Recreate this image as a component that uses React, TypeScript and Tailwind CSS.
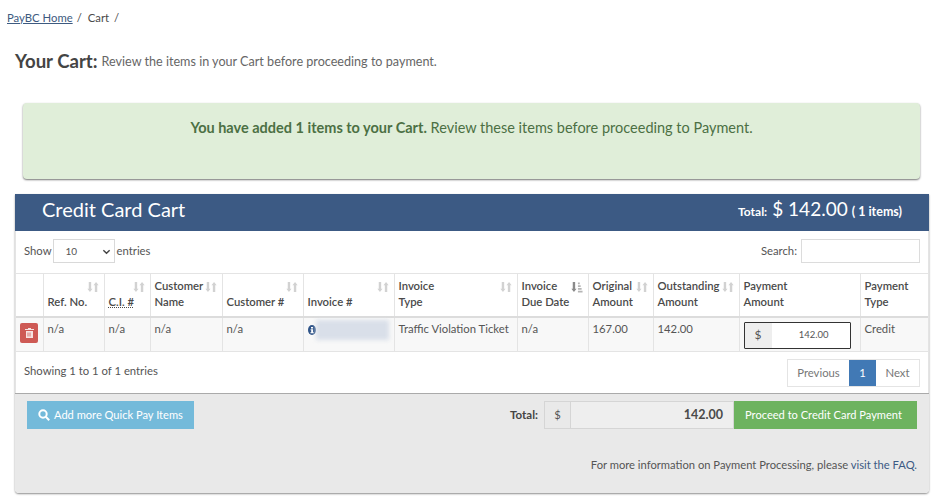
const F = "[font-family:'Lato','Open_Sans',sans-serif]";

function Sort({ active = false }: { active?: boolean }) {
  return (
    <svg width="12" height="12" viewBox="0 0 13 13" className="absolute right-[5px] top-[7px]" fill={active ? "#8a8a8a" : "#d2d2d2"}>
      <path d="M1.9 1h2.6v7.5H6L3.2 12 .4 8.5h1.5z" />
      {active ? (
        <path d="M7.5 1.5h2v2h-2zM7.5 4.5h3v2h-3zM7.5 7.5h4v2h-4zM7.5 10.5h5v2h-5z" fill="#b5b5b5" />
      ) : (
        <path d="M8.5 12h2.6V4.5h1.5L9.8 1 7 4.5h1.5z" />
      )}
    </svg>
  );
}

const cols = [
  { w: "w-[27px]", label: null },
  { w: "w-[61px]", label: <>Ref. No.</> },
  { w: "w-[46px]", label: <span className="underline decoration-dotted">C.I. #</span> },
  { w: "w-[72px]", label: <>Customer<br />Name</> },
  { w: "w-[81px]", label: <>Customer #</> },
  { w: "w-[91px]", label: <>Invoice #</> },
  { w: "w-[123px]", label: <>Invoice<br />Type</> },
  { w: "w-[71px]", label: <>Invoice<br />Due Date</>, active: true },
  { w: "w-[65px]", label: <>Original<br />Amount</> },
  { w: "w-[86px]", label: <>Outstanding<br />Amount</> },
  { w: "w-[121px]", label: <>Payment<br />Amount</>, nosort: true },
  { w: "w-[68px]", label: <>Payment<br />Type</>, nosort: true },
];

const td = "border-r border-[#e4e4e4] last:border-r-0 px-[4px] pt-[3px] align-top whitespace-nowrap";

export default function App() {
  return (
    <div className={`${F} w-[936px] h-[500px] overflow-hidden bg-white text-[11.3px] leading-[16px] text-[#555]`}>
      <div className="pl-[7px] pt-[10px] h-[44px] flex items-start text-[#4a4a4a]">
        <a className="underline text-[#3d5a80]">PayBC Home</a>
        <span className="ml-[4px]">/</span>
        <span className="ml-[6px]">Cart</span>
        <span className="ml-[5px]">/</span>
      </div>
      <div className="pl-[15px] h-[59px] flex items-start pt-[4px]">
        <span className="text-[18.6px] leading-[26px] font-bold text-[#444]">Your Cart:</span>
        <span className="ml-[4px] mt-[6px] text-[#666] text-[12.6px]">Review the items in your Cart before proceeding to payment.</span>
      </div>
      <div className="mx-[23px] w-[897px] h-[76px] rounded-[4px] bg-[#e0eed9] shadow-[0_1px_2px_rgba(0,0,0,0.55)] pt-[15px] text-center text-[14.5px] leading-[20px] text-[#4c7044]">
        <b className="font-bold">You have added 1 items to your Cart.</b> Review these items before proceeding to Payment.
      </div>
      <div className="ml-[15px] mt-[15px] w-[914px] h-[299px] rounded-b-[4px] shadow-[0_1px_2px_rgba(0,0,0,0.45)] flex flex-col">
        <div className="h-[37px] bg-[#3c5a84] flex items-center justify-between pl-[27px] pr-[27px] pb-[7px] text-white">
          <span className="text-[20px] leading-[24px]">Credit Card Cart</span>
          <div className="flex items-baseline pt-[3px] leading-[24px]">
            <span className="text-[12px] font-bold">Total:</span>
            <span className="text-[19px] ml-[5px]">$ 142.00</span>
            <span className="text-[12.5px] font-bold ml-[4px]">( 1 items)</span>
          </div>
        </div>
        <div className="h-[162px] bg-white border-x border-[#e4e4e4] flex flex-col">
          <div className="h-[42px] flex items-center justify-between pl-[8px] pr-[8px] shrink-0">
            <div className="flex items-center -mt-[2px]">
              <span>Show</span>
              <div className="ml-[1px] w-[62px] h-[24px] border border-[#d9d9d9] flex items-center justify-between pl-[12px] pr-[3px] text-[10px]">
                10
                <svg width="9" height="9" viewBox="0 0 10 10" fill="none" stroke="#444" strokeWidth="1.6"><path d="M1.5 3.5 5 7l3.5-3.5" /></svg>
              </div>
              <span className="ml-[2px]">entries</span>
            </div>
            <div className="flex items-center -mt-[2px]">
              <span>Search:</span>
              <div className="ml-[4px] w-[119px] h-[24px] border border-[#dcdcdc]" />
            </div>
          </div>
          <table className="table-fixed border-collapse w-[912px] shrink-0">
            <thead>
              <tr className="h-[43px] border-t border-[#e4e4e4] border-b-[2px] border-b-[#dcdcdc]">
                {cols.map((c, i) => (
                  <th key={i} className={`${c.w} relative border-r border-[#e4e4e4] last:border-r-0 px-[4px] pb-[6px] text-left align-bottom font-semibold text-[#4a4a4a] leading-[16px]`}>
                    {c.label}
                    {c.label && !c.nosort && <Sort active={c.active} />}
                  </th>
                ))}
              </tr>
            </thead>
            <tbody>
              <tr className="h-[35px] bg-[#f8f8f8] border-b border-[#e4e4e4]">
                <td className="border-r border-[#e4e4e4] pl-[4px] pt-[5px] align-top">
                  <div className="w-[18px] h-[20px] rounded-[2px] bg-[#ce5a55] flex items-center justify-center">
                    <svg width="9" height="10" viewBox="0 0 9 10" fill="#f6e3e2"><path d="M3 0h3v1h3v1H0V1h3zM1 3h7v7H1zm1.6 1.5v4h.8v-4zm2 0v4h.8v-4z" fillRule="evenodd" /></svg>
                  </div>
                </td>
                <td className={td}>n/a</td>
                <td className={td}>n/a</td>
                <td className={td}>n/a</td>
                <td className={td}>n/a</td>
                <td className={td}>
                  <div className="flex items-start relative h-[24px]">
                    <svg width="8" height="10" viewBox="0 0 8 10" className="mt-[4px]"><ellipse cx="4" cy="5" rx="4" ry="5" fill="#2f5488" /><path d="M3 2h2v1.4H3zM2.6 4.2H5v3h.8v1H2.4v-1h.8V5.2h-.6z" fill="#fff" /></svg>
                    <div className="-mt-[1px] w-[73px] h-[20px] bg-[#d9dfe9] blur-[2px]" />
                  </div>
                </td>
                <td className={td}>Traffic Violation Ticket</td>
                <td className={td}>n/a</td>
                <td className={td}>167.00</td>
                <td className={td}>142.00</td>
                <td className="border-r border-[#e4e4e4] px-[4px] align-top pt-[4px]">
                  <div className="w-[107px] h-[27px] border border-[#333] rounded-[1px] flex text-[9.5px]">
                    <div className="w-[27px] bg-[#eee] flex items-center justify-center text-[12px]">$</div>
                    <div className="flex-1 bg-white flex items-center justify-end pr-[21px]">142.00</div>
                  </div>
                </td>
                <td className={td}>Credit</td>
              </tr>
            </tbody>
          </table>
          <div className="flex items-start justify-between pl-[8px] pr-[8px] pt-[7px]">
            <span className="pt-[4px]">Showing 1 to 1 of 1 entries</span>
            <div className="flex h-[28px] border border-[#e4e4e4]">
              <span className="w-[61px] flex items-center justify-center text-[#777]">Previous</span>
              <span className="w-[27px] bg-[#4179b5] text-white flex items-center justify-center">1</span>
              <span className="w-[43px] flex items-center justify-center text-[#777]">Next</span>
            </div>
          </div>
        </div>
        <div className="flex-1 bg-[#e9e9e9] border-t border-[#aaa] rounded-b-[4px] px-[12px] pt-[7px] flex flex-col">
          <div className="flex items-start justify-between">
            <button className="w-[167px] h-[28px] bg-[#74bada] text-white flex items-center pl-[11px] text-[11.1px] whitespace-nowrap">
              <svg width="12" height="12" viewBox="0 0 12 12" fill="none" stroke="#fff" strokeWidth="2"><circle cx="5" cy="5" r="3.7" /><path d="m7.8 7.8 3.4 3.4" /></svg>
              <span className="ml-[4px]">Add more Quick Pay Items</span>
            </button>
            <div className="flex items-center h-[28px]">
              <span className="font-bold text-[#444] text-[11.5px] mr-[6px]">Total:</span>
              <div className="w-[27px] h-[28px] border border-[#d5d5d5] flex items-center justify-center">$</div>
              <div className="w-[163px] h-[28px] border-y border-r border-[#d5d5d5] bg-[#eee] flex items-center justify-end pr-[10px] text-[12.5px] font-bold text-[#4a4a4a]">142.00</div>
              <button className="w-[183px] h-[28px] bg-[#6db35f] text-white flex items-center justify-center pr-[4px] text-[11.1px]">Proceed to Credit Card Payment</button>
            </div>
          </div>
          <div className="mt-[28px] text-right text-[11.2px]">For more information on Payment Processing, please <a className="text-[#3c5a84]">visit the FAQ.</a></div>
        </div>
      </div>
    </div>
  );
}
